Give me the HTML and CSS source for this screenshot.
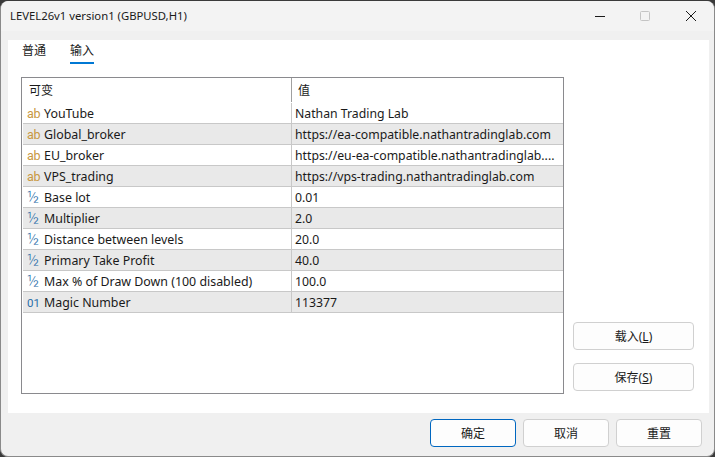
FILE: index.html
```html
<!DOCTYPE html>
<html lang="zh">
<head>
<meta charset="utf-8">
<title>LEVEL26v1</title>
<link rel="stylesheet" href="styles.css">
</head>
<body>
<div class="window">
  <header class="titlebar">
    <span class="title">LEVEL26v1 version1 (GBPUSD,H1)</span>
    <div class="controls">
      <svg width="12" height="12" viewBox="0 0 12 12"><path d="M2 6.5h10" stroke="#1a1a1a" fill="none"/></svg>
      <svg width="12" height="12" viewBox="0 0 12 12"><rect x="1.5" y="1.5" width="9" height="9" rx="1" stroke="#c4c4c4" fill="none"/></svg>
      <svg width="12" height="12" viewBox="0 0 12 12"><path d="M1 1l10 10M11 1L1 11" stroke="#1a1a1a" fill="none"/></svg>
    </div>
  </header>
  <main class="panel">
    <nav class="tabs">
      <span class="tab">普通</span>
      <span class="tab active">输入</span>
    </nav>
    <div class="content">
      <div class="table">
        <div class="thead">
          <div class="hcell hname">可变</div>
          <div class="hcell hval">值</div>
        </div>
        <div class="row"><div class="name"><i class="ic str">ab</i>YouTube</div><div class="val">Nathan Trading Lab</div></div>
        <div class="row alt"><div class="name"><i class="ic str">ab</i>Global_broker</div><div class="val">https://ea-compatible.nathantradinglab.com</div></div>
        <div class="row"><div class="name"><i class="ic str">ab</i>EU_broker</div><div class="val">https://eu-ea-compatible.nathantradinglab....</div></div>
        <div class="row alt"><div class="name"><i class="ic str">ab</i>VPS_trading</div><div class="val">https://vps-trading.nathantradinglab.com</div></div>
        <div class="row"><div class="name"><i class="ic num">½</i>Base lot</div><div class="val">0.01</div></div>
        <div class="row alt"><div class="name"><i class="ic num">½</i>Multiplier</div><div class="val">2.0</div></div>
        <div class="row"><div class="name"><i class="ic num">½</i>Distance between levels</div><div class="val">20.0</div></div>
        <div class="row alt"><div class="name"><i class="ic num">½</i>Primary Take Profit</div><div class="val">40.0</div></div>
        <div class="row"><div class="name"><i class="ic num">½</i>Max % of Draw Down (100 disabled)</div><div class="val">100.0</div></div>
        <div class="row alt"><div class="name"><i class="ic int">01</i>Magic Number</div><div class="val">113377</div></div>
      </div>
      <aside class="side">
        <button class="btn side-btn">载入(<u>L</u>)</button>
        <button class="btn side-btn">保存(<u>S</u>)</button>
      </aside>
    </div>
  </main>
  <footer class="footer">
    <button class="btn foot-btn primary">确定</button>
    <button class="btn foot-btn">取消</button>
    <button class="btn foot-btn">重置</button>
  </footer>
</div>
</body>
</html>
```
FILE: styles.css
```css
* { box-sizing: border-box; }
html, body { margin: 0; height: 100%; }
body {
  background: #3a3a3a;
  font-family: "Noto Sans", "Noto Sans CJK SC", sans-serif;
  font-size: 12px;
  color: #1a1a1a;
  overflow: hidden;
}
.window {
  width: 715px;
  height: 456px;
  margin-top: 1px;
  background: #f0f0f0;
  border-radius: 8px;
  border-left: 1px solid #8a8a8a;
  border-bottom: 1px solid #8a8a8a;
  border-right: 1px solid #8a8a8a;
  display: flex;
  flex-direction: column;
}
.titlebar {
  height: 30px;
  display: flex;
  align-items: center;
  justify-content: space-between;
  padding-left: 9px;
  background: #f3f3f3;
  border-radius: 8px 8px 0 0;
}
.title { font-size: 11.3px; line-height: 30px; }
.controls { display: flex; gap: 34px; padding-right: 17px; }
.panel {
  margin: 9px 5px 0 7px;
  height: 373px;
  background: #fff;
  display: flex;
  flex-direction: column;
}
.tabs {
  display: flex;
  gap: 24px;
  padding-left: 14px;
  height: 25px;
}
.tab { height: 24px; line-height: 22px; font-size: 12px; }
.tab.active { border-bottom: 2px solid #0078d4; }
.content {
  display: flex;
  padding: 12px 15px 0 13px;
  gap: 9px;
}
.table {
  width: 544px;
  height: 317px;
  border: 1px solid #8a8a8e;
  padding-left: 1px;
}
.thead { display: flex; height: 25px; }
.hcell { line-height: 25px; }
.hname { width: 268px; padding-left: 6px; }
.hval { padding-left: 6px; border-left: 1px solid #a0a0a0; height: 24px; }
.row {
  display: flex;
  width: 540px;
  height: 21px;
  border-bottom: 1px solid #c8c8c8;
  font-size: 12.4px;
}
.row.alt { background: #e9e9e9; }
.name {
  width: 268px;
  display: flex;
  align-items: center;
  padding: 1px 0 0 4px;
  white-space: nowrap;
}
.val {
  flex: 1;
  padding-left: 3px;
  border-left: 1px solid #c8c8c8;
  font-size: 12.25px;
  line-height: 22px;
  white-space: nowrap;
}
.ic {
  width: 17px;
  font-style: normal;
  flex: none;
  font-family: "Roboto", sans-serif;
  line-height: 14px;
}
.str { color: #c8973f; font-size: 12.5px; letter-spacing: -0.3px; }
.num { color: #2a6ea8; font-size: 16px; font-weight: 300; }
.int { color: #2a6ea8; font-size: 11.5px; }
.side {
  display: flex;
  flex-direction: column;
  gap: 13px;
  padding-top: 245px;
}
.btn {
  font: inherit;
  color: #1a1a1a;
  background: #fdfdfd;
  border: 1px solid #d0d0d0;
  border-radius: 4px;
  padding: 0;
}
.side-btn { width: 121px; height: 28px; }
.footer {
  display: flex;
  justify-content: flex-end;
  gap: 7px;
  padding: 6px 12px 0 0;
}
.foot-btn { width: 86px; height: 28px; }
.primary { border-color: #0067c0; }
```
